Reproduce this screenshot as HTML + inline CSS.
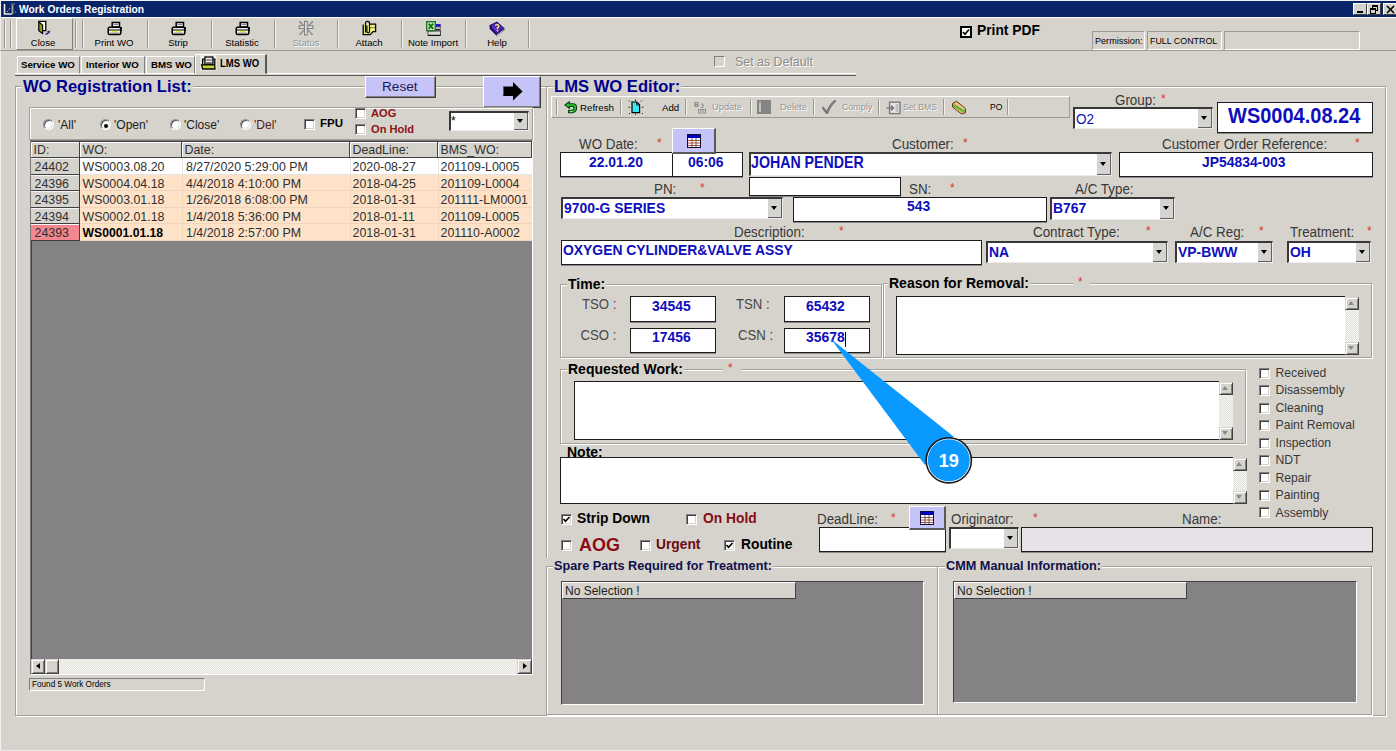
<!DOCTYPE html>
<html><head><meta charset="utf-8">
<style>
*{margin:0;padding:0;box-sizing:border-box}
html,body{width:1396px;height:751px;overflow:hidden}
body{background:#d6d3cd;position:relative;font-family:"Liberation Sans",sans-serif;color:#000}
.a{position:absolute}
.t{position:absolute;white-space:nowrap;line-height:1}
.etch{position:absolute;border:1px solid #a3a09a;box-shadow:inset 1px 1px 0 #fff,1px 1px 0 #fff}
.vsep{position:absolute;width:2px;border-left:1px solid #9a978f;border-right:1px solid #f2f1ee}
.tb{position:absolute;background:#fff;border:1px solid #1c1c1c;box-shadow:0 1px 0 #8a8a8a}
.cb{position:absolute;background:#fff;border-style:solid;border-width:2px 1px 1px 2px;border-color:#383838 #ececec #ececec #383838}
.dd{position:absolute;right:0;top:0;bottom:0;width:14px;background:#d6d4d0;border-right:1px solid #606060;border-bottom:1px solid #606060}
.dd:after{content:"";position:absolute;left:3px;top:50%;margin-top:-2.5px;border-left:3.5px solid transparent;border-right:3.5px solid transparent;border-top:4px solid #000}
.lbl{position:absolute;white-space:nowrap;line-height:1;font-size:13.4px;color:#383838;transform:scaleY(1.16);transform-origin:0 85%}
.star{position:absolute;color:#e03030;font-size:12px;line-height:1}
.val{position:absolute;white-space:nowrap;line-height:1;font-size:13.9px;font-weight:bold;color:#0e0ebc;transform:scaleY(1.1);transform-origin:0 85%}
.chk{position:absolute;width:11px;height:11px;background:#fff;border:1px solid;border-color:#808080 #fff #fff #808080;box-shadow:inset 1px 1px 0 #404040,inset -1px -1px 0 #d6d3cd}
.rad{position:absolute;width:11px;height:11px;border-radius:50%;background:#fff;border:1px solid;border-color:#909090 #fff #fff #909090;box-shadow:inset 1px 1px 0 #505050,inset -1px -1px 0 #e0ded8}
.btnl{position:absolute;background:#c6c3f8;border:1px solid;border-color:#fff #404040 #404040 #fff;box-shadow:inset -1px -1px 0 #808080}
.grp{position:absolute;font-weight:bold;font-size:14px;line-height:1;white-space:nowrap;background:#d6d3cd;padding:0 1px}
.tbl{font-size:9.6px;line-height:1;white-space:nowrap;position:absolute;transform:translateX(-50%)}
.vsb{position:absolute;width:14px;background:repeating-conic-gradient(#e2e0db 0 25%,#f6f5f2 0 50%) 0 0/2px 2px}
.sbu,.sbd{position:absolute;left:0;width:14px;height:13px;background:#d6d3cd;border:1px solid;border-color:#d6d3cd #404040 #404040 #d6d3cd;box-shadow:inset 1px 1px 0 #fff,inset -1px -1px 0 #808080}
.sbd{bottom:0}.sbu{top:0}
.sbu:after{content:"";position:absolute;left:2.5px;top:3.5px;border-left:3.5px solid transparent;border-right:3.5px solid transparent;border-bottom:4px solid #8a8a8a}
.sbd:after{content:"";position:absolute;left:2.5px;top:3.5px;border-left:3.5px solid transparent;border-right:3.5px solid transparent;border-top:4px solid #8a8a8a}
.memo{position:absolute;background:#fff;border:1px solid #1c1c1c;border-right:none}
</style></head><body>

<!-- title bar -->
<div class="a" style="left:0;top:0;width:1396px;height:1px;background:#f0f0f0"></div>
<div class="a" style="left:0;top:0;width:1px;height:751px;background:#f0f0f0"></div>
<div class="a" style="left:1px;top:1px;width:1395px;height:16px;background:#0a246a"></div>
<div class="t" style="left:19px;top:4.5px;font-size:10.3px;font-weight:bold;color:#fff">Work Orders Registration</div>
<svg class="a" style="left:3px;top:3px" width="14" height="12"><path d="M1.5 1v10H9" stroke="#e8e8e0" stroke-width="1.6" fill="none"/><path d="M4 9l3-4" stroke="#c8c8d8" stroke-width="1" stroke-dasharray="1 1"/><path d="M9.5 2v9" stroke="#a8a880" stroke-width="1.8"/><path d="M8 1h4" stroke="#8090b0" stroke-width="1"/><circle cx="12.5" cy="9" r="0.6" fill="#c0c0d0"/></svg>
<div class="a" style="left:1353px;top:3px;width:14px;height:12px;background:#d6d3cd;border:1px solid;border-color:#fff #404040 #404040 #fff"><div class="a" style="left:3px;top:7px;width:6px;height:2px;background:#000"></div></div>
<div class="a" style="left:1367px;top:3px;width:14px;height:12px;background:#d6d3cd;border:1px solid;border-color:#fff #404040 #404040 #fff"><div class="a" style="left:4px;top:1px;width:6px;height:6px;border:1px solid #000;border-top-width:2px"></div><div class="a" style="left:2px;top:4px;width:6px;height:6px;border:1px solid #000;border-top-width:2px;background:#d6d3cd"></div></div>
<div class="a" style="left:1383px;top:3px;width:14px;height:12px;background:#d6d3cd;border:1px solid;border-color:#fff #404040 #404040 #fff"><svg class="a" style="left:2px;top:1px" width="9" height="9"><path d="M1 1L8 8M8 1L1 8" stroke="#000" stroke-width="1.6"/></svg></div>
<div class="a" style="left:0;top:750px;width:1396px;height:1px;background:#ebeae6"></div>
<!-- toolbar -->
<div class="a" style="left:0;top:17px;width:1396px;height:1px;background:#fff"></div>
<div class="a" style="left:0;top:50px;width:1396px;height:1px;background:#9d9a94"></div>

<div class="vsep" style="left:4px;top:20px;height:28px"></div>
<div class="vsep" style="left:10px;top:20px;height:28px"></div>
<div class="a" style="left:16px;top:18px;width:57px;height:32px;border:1px solid;border-color:#fff #808080 #808080 #fff"></div>
<div class="vsep" style="left:75px;top:20px;height:28px"></div>
<div class="vsep" style="left:82px;top:20px;height:28px"></div>
<div class="vsep" style="left:147px;top:20px;height:28px"></div>
<div class="vsep" style="left:211px;top:20px;height:28px"></div>
<div class="vsep" style="left:274px;top:20px;height:28px"></div>
<div class="vsep" style="left:337px;top:20px;height:28px"></div>
<div class="vsep" style="left:401px;top:20px;height:28px"></div>
<div class="vsep" style="left:465px;top:20px;height:28px"></div>
<div class="vsep" style="left:528px;top:20px;height:28px"></div>
<div class="tbl" style="left:43px;top:38px">Close</div>
<div class="tbl" style="left:114px;top:38px">Print WO</div>
<div class="tbl" style="left:178px;top:38px">Strip</div>
<div class="tbl" style="left:242px;top:38px">Statistic</div>
<div class="tbl" style="left:306px;top:38px;color:#96948f;text-shadow:1px 1px 0 #fff">Status</div>
<div class="tbl" style="left:369px;top:38px">Attach</div>
<div class="tbl" style="left:433px;top:38px">Note Import</div>
<div class="tbl" style="left:497px;top:38px">Help</div>

<!-- print pdf / permission -->
<div class="a" style="left:960px;top:26px;width:12px;height:12px;border:2px solid #000;background:#fff"></div>
<svg class="a" style="left:960px;top:26px" width="12" height="12"><path d="M3 6 L5 8.3 L9 3.5" stroke="#000" stroke-width="1.7" fill="none"/></svg>
<div class="t" style="left:977px;top:24px;font-size:13.8px;font-weight:bold;color:#000">Print PDF</div>
<div class="a" style="left:1092px;top:31px;width:53px;height:19px;border:1px solid;border-color:#9d9a94 #fff #fff #9d9a94"></div>
<div class="t" style="left:1095px;top:37px;font-size:9.1px">Permission:</div>
<div class="a" style="left:1147px;top:31px;width:75px;height:19px;border:1px solid;border-color:#9d9a94 #fff #fff #9d9a94"></div>
<div class="t" style="left:1150px;top:37px;font-size:8.9px">FULL CONTROL</div>
<div class="a" style="left:1224px;top:31px;width:136px;height:19px;border:1px solid;border-color:#9d9a94 #fff #fff #9d9a94"></div>

<!-- tabs -->
<div class="a" style="left:15px;top:73px;width:841px;height:1px;background:#fff"></div>
<div class="a" style="left:15px;top:75px;width:841px;height:1px;background:#5a5a5a"></div>
<div class="a" style="left:17px;top:56px;width:63px;height:18px;border:1px solid;border-color:#fff #808080 transparent #fff"></div>
<div class="t" style="left:21px;top:60px;font-size:9.7px;font-weight:bold">Service WO</div>
<div class="a" style="left:81px;top:56px;width:64px;height:18px;border:1px solid;border-color:#fff #808080 transparent #fff"></div>
<div class="t" style="left:86px;top:60px;font-size:9.7px;font-weight:bold">Interior WO</div>
<div class="a" style="left:146px;top:56px;width:49px;height:18px;border:1px solid;border-color:#fff #808080 transparent #fff"></div>
<div class="t" style="left:151px;top:60px;font-size:9.7px;font-weight:bold">BMS WO</div>
<div class="a" style="left:195px;top:54px;width:72px;height:20px;background:#d6d3cd;border:1px solid;border-color:#fff #5a5a5a transparent #fff;border-right-width:2px"></div>
<svg class="a" style="left:200px;top:55px" width="17" height="16"><rect x="0.5" y="0.5" width="16" height="15" fill="#f6f6ee"/><path d="M2.6 10V4.2H4.6M12.8 4.2H14.8V10" stroke="#000" stroke-width="1.3" fill="#c8c8b0"/><rect x="4.9" y="2" width="8" height="7.4" fill="#ececf2" stroke="#000" stroke-width="1.3"/><path d="M6.2 5h5.5" stroke="#707070" stroke-width="1.4"/><path d="M6.2 8h5.5" stroke="#000" stroke-width="1"/><path d="M1.6 9.8H14.6L15 14H2.6Z" fill="#c8d838" stroke="#000" stroke-width="1.3"/></svg>
<div class="t" style="left:220px;top:58.5px;font-size:9.5px;font-weight:bold;transform:scaleY(1.12);transform-origin:0 85%">LMS WO</div>

<div class="t" style="left:714px;top:55.5px;width:11px;height:11px;border:1px solid;border-color:#808080 #fff #fff #808080"></div>
<div class="t" style="left:735px;top:55.5px;font-size:12.4px;color:#8c8a86;text-shadow:1px 1px 0 #fff">Set as Default</div>

<!-- outer frame -->
<div class="etch" style="left:15px;top:86px;width:1371px;height:630px"></div>
<div class="grp" style="left:22px;top:78px;font-size:16.5px;color:#00008c">WO Registration List:</div>

<!-- left panel -->
<div class="btnl" style="left:365px;top:76px;width:71px;height:22px"></div>
<div class="t" style="left:382px;top:80px;font-size:13.6px;color:#1c1c50">Reset</div>
<div class="btnl" style="left:483px;top:76px;width:58px;height:32px"></div>
<svg class="a" style="left:503px;top:82px" width="21" height="20"><path d="M0 4.5H10V0L19.6 9.6 10 18.6V14H0Z" fill="#000"/><path d="M0.5 5V13.5" stroke="#555" stroke-width="1"/></svg>

<div class="etch" style="left:29px;top:107px;width:504px;height:33px"></div>
<div class="rad" style="left:43px;top:119px"></div><div class="t" style="left:58px;top:119px;font-size:12px;color:#202020">'All'</div>
<div class="rad" style="left:100px;top:119px"></div><div class="a" style="left:103.5px;top:123.5px;width:4px;height:4px;border-radius:50%;background:#000"></div><div class="t" style="left:114px;top:119px;font-size:12px;color:#202020">'Open'</div>
<div class="rad" style="left:170px;top:119px"></div><div class="t" style="left:184px;top:119px;font-size:12px;color:#202020">'Close'</div>
<div class="rad" style="left:240px;top:119px"></div><div class="t" style="left:254px;top:119px;font-size:12px;color:#5a1a1a">'Del'</div>
<div class="chk" style="left:304px;top:119px"></div><div class="t" style="left:320px;top:118px;font-size:11.5px;font-weight:bold">FPU</div>
<div class="chk" style="left:355px;top:108px"></div><div class="t" style="left:371px;top:108px;font-size:11.1px;font-weight:bold;color:#8b1414">AOG</div>
<div class="chk" style="left:355px;top:124px"></div><div class="t" style="left:371px;top:124px;font-size:11.1px;font-weight:bold;color:#8b1414">On Hold</div>
<div class="cb" style="left:449px;top:111px;width:80px;height:20px"><div class="t" style="left:0px;top:2px;font-size:12px">*</div><div class="dd"></div></div>

<!-- grid -->
<div class="a" style="left:30px;top:140px;width:503px;height:535px;background:#858285;border:1px solid;border-color:#7a7a7a #fff #fff #7a7a7a;box-shadow:inset 1px 1px 0 #404040"></div>






<!--grid-->
<div class="a" style="left:31px;top:142px;width:49px;height:16px;background:#d6d3cd;border-right:1px solid #404040;border-bottom:1px solid #404040;box-shadow:inset 1px 1px 0 #fff"></div>
<div class="t" style="left:33.5px;top:143.5px;font-size:12.4px;color:#303030">ID:</div>
<div class="a" style="left:80px;top:142px;width:102px;height:16px;background:#d6d3cd;border-right:1px solid #404040;border-bottom:1px solid #404040;box-shadow:inset 1px 1px 0 #fff"></div>
<div class="t" style="left:82.5px;top:143.5px;font-size:12.4px;color:#303030">WO:</div>
<div class="a" style="left:182px;top:142px;width:168px;height:16px;background:#d6d3cd;border-right:1px solid #404040;border-bottom:1px solid #404040;box-shadow:inset 1px 1px 0 #fff"></div>
<div class="t" style="left:184.5px;top:143.5px;font-size:12.4px;color:#303030">Date:</div>
<div class="a" style="left:350px;top:142px;width:88px;height:16px;background:#d6d3cd;border-right:1px solid #404040;border-bottom:1px solid #404040;box-shadow:inset 1px 1px 0 #fff"></div>
<div class="t" style="left:352.5px;top:143.5px;font-size:12.4px;color:#303030">DeadLine:</div>
<div class="a" style="left:438px;top:142px;width:94px;height:16px;background:#d6d3cd;border-right:1px solid #404040;border-bottom:1px solid #404040;box-shadow:inset 1px 1px 0 #fff"></div>
<div class="t" style="left:440.5px;top:143.5px;font-size:12.4px;color:#303030">BMS_WO:</div>
<div class="a" style="left:31px;top:158px;width:49px;height:17px;background:#d6d3cd;border-right:1px solid #404040;border-bottom:1px solid #404040;box-shadow:inset 0 1px 0 #f4f4f4"></div>
<div class="t" style="left:34.5px;top:160.8px;font-size:12.4px;color:#303030">24402</div>
<div class="a" style="left:80px;top:158px;width:452px;height:17px;background:#ffffff;border-bottom:1px solid #e6e4e0"></div>
<div class="t" style="left:82.5px;top:160.8px;color:#303030;font-size:12.4px">WS0003.08.20</div>
<div class="a" style="left:181.5px;top:158px;width:1px;height:17px;background:#e6e4e0"></div>
<div class="t" style="left:186px;top:160.8px;color:#303030;font-size:12.4px">8/27/2020 5:29:00 PM</div>
<div class="a" style="left:349.5px;top:158px;width:1px;height:17px;background:#e6e4e0"></div>
<div class="t" style="left:352.5px;top:160.8px;color:#303030;font-size:12.4px">2020-08-27</div>
<div class="a" style="left:437.5px;top:158px;width:1px;height:17px;background:#e6e4e0"></div>
<div class="t" style="left:440.5px;top:160.8px;color:#303030;font-size:12.4px">201109-L0005</div>
<div class="a" style="left:31px;top:175px;width:49px;height:16px;background:#d6d3cd;border-right:1px solid #404040;border-bottom:1px solid #404040;box-shadow:inset 0 1px 0 #f4f4f4"></div>
<div class="t" style="left:34.5px;top:177.8px;font-size:12.4px;color:#303030">24396</div>
<div class="a" style="left:80px;top:175px;width:452px;height:16px;background:#fde2c8;border-bottom:1px solid #f0d4bc"></div>
<div class="t" style="left:82.5px;top:177.8px;color:#303030;font-size:12.4px">WS0004.04.18</div>
<div class="a" style="left:181.5px;top:175px;width:1px;height:16px;background:#f0d4bc"></div>
<div class="t" style="left:186px;top:177.8px;color:#303030;font-size:12.4px">4/4/2018 4:10:00 PM</div>
<div class="a" style="left:349.5px;top:175px;width:1px;height:16px;background:#f0d4bc"></div>
<div class="t" style="left:352.5px;top:177.8px;color:#303030;font-size:12.4px">2018-04-25</div>
<div class="a" style="left:437.5px;top:175px;width:1px;height:16px;background:#f0d4bc"></div>
<div class="t" style="left:440.5px;top:177.8px;color:#303030;font-size:12.4px">201109-L0004</div>
<div class="a" style="left:31px;top:191px;width:49px;height:17px;background:#d6d3cd;border-right:1px solid #404040;border-bottom:1px solid #404040;box-shadow:inset 0 1px 0 #f4f4f4"></div>
<div class="t" style="left:34.5px;top:193.8px;font-size:12.4px;color:#303030">24395</div>
<div class="a" style="left:80px;top:191px;width:452px;height:17px;background:#fde2c8;border-bottom:1px solid #f0d4bc"></div>
<div class="t" style="left:82.5px;top:193.8px;color:#303030;font-size:12.4px">WS0003.01.18</div>
<div class="a" style="left:181.5px;top:191px;width:1px;height:17px;background:#f0d4bc"></div>
<div class="t" style="left:186px;top:193.8px;color:#303030;font-size:12.4px">1/26/2018 6:08:00 PM</div>
<div class="a" style="left:349.5px;top:191px;width:1px;height:17px;background:#f0d4bc"></div>
<div class="t" style="left:352.5px;top:193.8px;color:#303030;font-size:12.4px">2018-01-31</div>
<div class="a" style="left:437.5px;top:191px;width:1px;height:17px;background:#f0d4bc"></div>
<div class="t" style="left:440.5px;top:193.8px;color:#303030;font-size:12.4px">201111-LM0001</div>
<div class="a" style="left:31px;top:208px;width:49px;height:16px;background:#d6d3cd;border-right:1px solid #404040;border-bottom:1px solid #404040;box-shadow:inset 0 1px 0 #f4f4f4"></div>
<div class="t" style="left:34.5px;top:210.8px;font-size:12.4px;color:#303030">24394</div>
<div class="a" style="left:80px;top:208px;width:452px;height:16px;background:#fde2c8;border-bottom:1px solid #f0d4bc"></div>
<div class="t" style="left:82.5px;top:210.8px;color:#303030;font-size:12.4px">WS0002.01.18</div>
<div class="a" style="left:181.5px;top:208px;width:1px;height:16px;background:#f0d4bc"></div>
<div class="t" style="left:186px;top:210.8px;color:#303030;font-size:12.4px">1/4/2018 5:36:00 PM</div>
<div class="a" style="left:349.5px;top:208px;width:1px;height:16px;background:#f0d4bc"></div>
<div class="t" style="left:352.5px;top:210.8px;color:#303030;font-size:12.4px">2018-01-11</div>
<div class="a" style="left:437.5px;top:208px;width:1px;height:16px;background:#f0d4bc"></div>
<div class="t" style="left:440.5px;top:210.8px;color:#303030;font-size:12.4px">201109-L0005</div>
<div class="a" style="left:31px;top:224px;width:49px;height:17px;background:#f3868e;border-right:1px solid #404040;border-bottom:1px solid #404040;box-shadow:inset 0 1px 0 #f4f4f4"></div>
<div class="t" style="left:34.5px;top:226.8px;font-size:12.4px;color:#303030">24393</div>
<div class="a" style="left:80px;top:224px;width:452px;height:17px;background:#fde2c8;border-bottom:1px solid #f0d4bc"></div>
<div class="t" style="left:82.5px;top:226.8px;font-weight:bold;color:#000;font-size:12.2px">WS0001.01.18</div>
<div class="a" style="left:181.5px;top:224px;width:1px;height:17px;background:#f0d4bc"></div>
<div class="t" style="left:186px;top:226.8px;color:#303030;font-size:12.4px">1/4/2018 2:57:00 PM</div>
<div class="a" style="left:349.5px;top:224px;width:1px;height:17px;background:#f0d4bc"></div>
<div class="t" style="left:352.5px;top:226.8px;color:#303030;font-size:12.4px">2018-01-31</div>
<div class="a" style="left:437.5px;top:224px;width:1px;height:17px;background:#f0d4bc"></div>
<div class="t" style="left:440.5px;top:226.8px;color:#303030;font-size:12.4px">201110-A0002</div>
<!--/grid-->
<!-- status bar of left grid -->
<div class="a" style="left:31px;top:659px;width:501px;height:15px;background:repeating-conic-gradient(#e6e4df 0 25%,#f4f3f0 0 50%) 0 0/2px 2px"></div>
<div class="a" style="left:31px;top:659px;width:14px;height:15px;background:#d6d3cd;border:1px solid;border-color:#d6d3cd #404040 #404040 #d6d3cd;box-shadow:inset 1px 1px 0 #fff,inset -1px -1px 0 #808080"><div class="a" style="left:4px;top:3px;border-top:3.5px solid transparent;border-bottom:3.5px solid transparent;border-right:4px solid #000"></div></div>
<div class="a" style="left:45px;top:659px;width:14px;height:15px;background:#d6d3cd;border:1px solid;border-color:#d6d3cd #404040 #404040 #d6d3cd;box-shadow:inset 1px 1px 0 #fff,inset -1px -1px 0 #808080"></div>
<div class="a" style="left:517px;top:659px;width:15px;height:15px;background:#d6d3cd;border:1px solid;border-color:#d6d3cd #404040 #404040 #d6d3cd;box-shadow:inset 1px 1px 0 #fff,inset -1px -1px 0 #808080"><div class="a" style="left:5px;top:3px;border-top:3.5px solid transparent;border-bottom:3.5px solid transparent;border-left:4px solid #000"></div></div>
<div class="a" style="left:29px;top:678px;width:176px;height:13px;border:1px solid;border-color:#808080 #fff #fff #808080"></div>
<div class="t" style="left:32px;top:681px;font-size:8.2px;color:#000">Found 5 Work Orders</div>

<!-- right panel -->
<div class="etch" style="left:546px;top:86px;width:840px;height:630px"></div>
<div class="grp" style="left:553px;top:79px;font-size:16.6px;color:#00008c">LMS WO Editor:</div>

<!-- editor toolbar -->
<div class="a" style="left:551px;top:96px;width:519px;height:22px;border:1px solid;border-color:#fff #9d9a94 #9d9a94 #fff"></div>
<div class="vsep" style="left:556px;top:99px;height:16px"></div>
<div class="t" style="left:580px;top:103px;font-size:9.7px">Refresh</div>
<div class="vsep" style="left:620px;top:99px;height:16px"></div>
<div class="t" style="left:662px;top:103px;font-size:9.7px">Add</div>
<div class="vsep" style="left:685px;top:99px;height:16px"></div>
<div class="t" style="left:712px;top:103px;font-size:9.3px;color:#96948f;text-shadow:1px 1px 0 #fff">Update</div>
<div class="vsep" style="left:750px;top:99px;height:16px"></div>
<div class="t" style="left:780px;top:103px;font-size:9.3px;color:#96948f;text-shadow:1px 1px 0 #fff">Delete</div>
<div class="vsep" style="left:813px;top:99px;height:16px"></div>
<div class="t" style="left:842px;top:103px;font-size:8.9px;color:#96948f;text-shadow:1px 1px 0 #fff">Comply</div>
<div class="vsep" style="left:878px;top:99px;height:16px"></div>
<div class="t" style="left:903px;top:103px;font-size:8.6px;color:#96948f;text-shadow:1px 1px 0 #fff">Set BMS</div>
<div class="vsep" style="left:943px;top:99px;height:16px"></div>
<div class="t" style="left:990px;top:103px;font-size:8.6px">PO</div>
<div class="vsep" style="left:1007px;top:99px;height:16px"></div>

<!-- group / WO no -->
<div class="lbl" style="left:1115px;top:94px">Group:</div><div class="star" style="left:1161px;top:93px">*</div>
<div class="cb" style="left:1073px;top:107px;width:140px;height:22px"><div class="val" style="left:1px;top:3.5px;font-weight:normal;font-size:13.5px">O2</div><div class="dd"></div></div>
<div class="tb" style="left:1217px;top:102px;width:156px;height:31px"></div>
<div class="val" style="left:1228px;top:106px;font-size:20px">WS0004.08.24</div>

<!-- row 1 -->
<div class="lbl" style="left:579px;top:138px">WO Date:</div><div class="star" style="left:657px;top:137px">*</div>

<div class="lbl" style="left:892px;top:138px">Customer:</div><div class="star" style="left:963px;top:137px">*</div>
<div class="lbl" style="left:1162px;top:138px">Customer Order Reference:</div><div class="star" style="left:1355px;top:137px">*</div>
<div class="tb" style="left:560px;top:152px;width:113px;height:25px"></div>
<div class="val" style="left:589px;top:156px">22.01.20</div>
<div class="tb" style="left:672px;top:152px;width:71px;height:25px"></div>
<div class="val" style="left:688px;top:156px">06:06</div>
<div class="cb" style="left:749px;top:152px;width:363px;height:24px"><div class="val" style="left:0px;top:2px;font-size:14.2px">JOHAN PENDER</div><div class="dd"></div></div>
<div class="tb" style="left:1119px;top:152px;width:254px;height:25px"></div>
<div class="val" style="left:1202px;top:156px">JP54834-003</div>

<!-- row 2 -->
<div class="lbl" style="left:654px;top:183px">PN:</div><div class="star" style="left:700px;top:182px">*</div>
<div class="tb" style="left:749px;top:177px;width:152px;height:19px"></div>
<div class="lbl" style="left:909px;top:183px">SN:</div><div class="star" style="left:950px;top:182px">*</div>
<div class="lbl" style="left:1075px;top:183px">A/C Type:</div>
<div class="cb" style="left:561px;top:197px;width:222px;height:22px"><div class="val" style="left:1px;top:2.5px">9700-G SERIES</div><div class="dd"></div></div>
<div class="tb" style="left:793px;top:197px;width:254px;height:25px"></div>
<div class="val" style="left:907px;top:200px">543</div>
<div class="cb" style="left:1050px;top:197px;width:125px;height:23px"><div class="val" style="left:1px;top:2.5px">B767</div><div class="dd"></div></div>

<!-- row 3 -->
<div class="lbl" style="left:734px;top:226px">Description:</div><div class="star" style="left:839px;top:225px">*</div>
<div class="lbl" style="left:1033px;top:226px">Contract Type:</div><div class="star" style="left:1146px;top:225px">*</div>
<div class="lbl" style="left:1190px;top:226px">A/C Reg:</div><div class="star" style="left:1259px;top:225px">*</div>
<div class="lbl" style="left:1290px;top:226px">Treatment:</div><div class="star" style="left:1367px;top:225px">*</div>
<div class="tb" style="left:561px;top:240px;width:421px;height:25px"></div>
<div class="val" style="left:563px;top:244px">OXYGEN CYLINDER&amp;VALVE ASSY</div>
<div class="cb" style="left:986px;top:241px;width:182px;height:22px"><div class="val" style="left:1px;top:2.5px">NA</div><div class="dd"></div></div>
<div class="cb" style="left:1175px;top:241px;width:98px;height:22px"><div class="val" style="left:1px;top:2.5px">VP-BWW</div><div class="dd"></div></div>
<div class="cb" style="left:1287px;top:241px;width:84px;height:22px"><div class="val" style="left:1px;top:2.5px">OH</div><div class="dd"></div></div>

<!-- time group -->
<div class="etch" style="left:560px;top:284px;width:322px;height:74px"></div>
<div class="grp" style="left:567px;top:277px;font-size:14px;font-weight:bold">Time:</div>
<div class="lbl" style="left:582px;top:298px;font-size:13.2px;color:#484848">TSO :</div>
<div class="tb" style="left:630px;top:296px;width:86px;height:26px"></div>
<div class="val" style="left:652px;top:299.5px">34545</div>
<div class="lbl" style="left:580.5px;top:329.3px;font-size:13.2px;color:#484848">CSO :</div>
<div class="tb" style="left:630px;top:328px;width:86px;height:25px"></div>
<div class="val" style="left:652px;top:331px">17456</div>
<div class="lbl" style="left:736px;top:298px;font-size:13.2px;color:#484848">TSN :</div>
<div class="tb" style="left:784px;top:296px;width:86px;height:26px"></div>
<div class="val" style="left:806px;top:299.5px">65432</div>
<div class="lbl" style="left:738px;top:329.3px;font-size:13.2px;color:#484848">CSN :</div>
<div class="tb" style="left:784px;top:328px;width:86px;height:25px"></div>
<div class="val" style="left:806px;top:331px">35678</div>
<div class="a" style="left:845px;top:332px;width:1px;height:15px;background:#000"></div>

<!-- reason group -->
<div class="etch" style="left:883px;top:283px;width:489px;height:75px"></div>
<div class="grp" style="left:888px;top:276px;font-size:14px">Reason for Removal:</div>
<div class="star" style="left:1074px;top:277.5px;background:#d6d3cd;padding:0 7px 0 4px;line-height:0.8">*</div>
<div class="memo" style="left:896px;top:296px;width:449px;height:59px"></div><div class="vsb" style="left:1344.5px;top:296.5px;height:58px"><div class="sbu"></div><div class="sbd"></div></div>

<!-- requested work group -->
<div class="etch" style="left:560px;top:369px;width:686px;height:75px"></div>
<div class="grp" style="left:567px;top:362px;font-size:14px">Requested Work:</div>
<div class="star" style="left:723px;top:364px;background:#d6d3cd;padding:0 9px 0 5px;line-height:0.8">*</div>
<div class="memo" style="left:574px;top:381px;width:645px;height:59px"></div><div class="vsb" style="left:1218.5px;top:381.5px;height:58px"><div class="sbu"></div><div class="sbd"></div></div>

<!-- note -->
<div class="t" style="left:567px;top:445px;font-size:14px;font-weight:bold">Note:</div>
<div class="memo" style="left:560px;top:457px;width:673px;height:47px"></div><div class="vsb" style="left:1232.5px;top:457.5px;height:46px"><div class="sbu"></div><div class="sbd"></div></div>

<!-- checkboxes right -->
<div id="rchk"><div class="chk" style="left:1259px;top:368px"></div><div class="t" style="left:1275.5px;top:367.0px;font-size:12.2px;color:#383838">Received</div>
<div class="chk" style="left:1259px;top:385px"></div><div class="t" style="left:1275.5px;top:384.4px;font-size:12.2px;color:#383838">Disassembly</div>
<div class="chk" style="left:1259px;top:403px"></div><div class="t" style="left:1275.5px;top:401.9px;font-size:12.2px;color:#383838">Cleaning</div>
<div class="chk" style="left:1259px;top:420px"></div><div class="t" style="left:1275.5px;top:419.3px;font-size:12.2px;color:#383838">Paint Removal</div>
<div class="chk" style="left:1259px;top:438px"></div><div class="t" style="left:1275.5px;top:436.8px;font-size:12.2px;color:#383838">Inspection</div>
<div class="chk" style="left:1259px;top:455px"></div><div class="t" style="left:1275.5px;top:454.2px;font-size:12.2px;color:#383838">NDT</div>
<div class="chk" style="left:1259px;top:472px"></div><div class="t" style="left:1275.5px;top:471.7px;font-size:12.2px;color:#383838">Repair</div>
<div class="chk" style="left:1259px;top:490px"></div><div class="t" style="left:1275.5px;top:489.1px;font-size:12.2px;color:#383838">Painting</div>
<div class="chk" style="left:1259px;top:507px"></div><div class="t" style="left:1275.5px;top:506.6px;font-size:12.2px;color:#383838">Assembly</div></div></div>

<!-- bottom options -->
<div class="chk" style="left:561px;top:514px"></div><svg class="a" style="left:561px;top:514px" width="11" height="11"><path d="M2.5 5 L4.5 7.3 L8.5 3" stroke="#000" stroke-width="1.7" fill="none"/></svg>
<div class="t" style="left:577px;top:512px;font-size:13.8px;font-weight:bold">Strip Down</div>
<div class="chk" style="left:686px;top:514px"></div>
<div class="t" style="left:703px;top:512px;font-size:13.8px;font-weight:bold;color:#850c14">On Hold</div>
<div class="chk" style="left:561px;top:540px"></div>
<div class="t" style="left:579px;top:536px;font-size:18px;font-weight:bold;color:#8c0c16">AOG</div>
<div class="chk" style="left:640px;top:540px"></div>
<div class="t" style="left:656px;top:538px;font-size:13.8px;font-weight:bold;color:#6a0c12">Urgent</div>
<div class="chk" style="left:724px;top:540px"></div><svg class="a" style="left:724px;top:540px" width="11" height="11"><path d="M2.5 5 L4.5 7.3 L8.5 3" stroke="#000" stroke-width="1.7" fill="none"/></svg>
<div class="t" style="left:741px;top:538px;font-size:13.8px;font-weight:bold">Routine</div>

<div class="lbl" style="left:817px;top:513px">DeadLine:</div><div class="star" style="left:891px;top:512px">*</div>

<div class="tb" style="left:819px;top:527px;width:127px;height:25px"></div>
<div class="lbl" style="left:951px;top:513px">Originator:</div><div class="star" style="left:1033px;top:512px">*</div>
<div class="lbl" style="left:1182px;top:513px">Name:</div>
<div class="cb" style="left:949px;top:527px;width:70px;height:22px"><div class="dd"></div></div>
<div class="tb" style="left:1021px;top:527px;width:352px;height:25px;background:#e6e2e8"></div>

<!-- spare parts / cmm -->
<div class="a" style="left:545px;top:558px;width:4px;height:8px;background:#d6d3cd"></div>
<div class="etch" style="left:546px;top:566px;width:392px;height:149px"></div>
<div class="grp" style="left:553px;top:560px;font-size:12.7px;color:#10104c">Spare Parts Required for Treatment:</div>
<div class="a" style="left:561px;top:581px;width:363px;height:124px;background:#858285;border:1px solid;border-color:#404040 #fff #fff #404040"></div>
<div class="a" style="left:562px;top:582px;width:234px;height:17px;background:#d6d3cd;border:1px solid;border-color:#fff #404040 #404040 #fff"></div>
<div class="t" style="left:565px;top:585px;font-size:12px;color:#202020">No Selection !</div>

<div class="etch" style="left:937px;top:566px;width:435px;height:149px"></div>
<div class="grp" style="left:945px;top:560px;font-size:12.7px;color:#10104c">CMM Manual Information:</div>
<div class="a" style="left:953px;top:581px;width:404px;height:122px;background:#858285;border:1px solid;border-color:#404040 #fff #fff #404040"></div>
<div class="a" style="left:954px;top:582px;width:233px;height:17px;background:#d6d3cd;border:1px solid;border-color:#fff #404040 #404040 #fff"></div>
<div class="t" style="left:957px;top:585px;font-size:12px;color:#202020">No Selection !</div>


<div class="btnl" style="left:672px;top:128px;width:44px;height:26px;border-right-width:2px;border-bottom-width:2px;border-color:#fff #5a5a5a #5a5a5a #fff;box-shadow:none"></div>
<div class="btnl" style="left:909px;top:506px;width:37px;height:24px;border-right-width:2px;border-bottom-width:2px;border-color:#fff #5a5a5a #5a5a5a #fff;box-shadow:none"></div>
<!-- toolbar icons -->
<svg class="a" style="left:37px;top:20px" width="15" height="16"><path d="M2.2 1.4h6.6v9.2H5.5" fill="#fffff0" stroke="#000" stroke-width="1.3"/><path d="M1.8 1.6L5.6 5.2V13.6L1.8 10.6Z" fill="#8a9c1c" stroke="#000" stroke-width="1.2"/><path d="M8.5 14.2q2.2 0 3.2-2.2" stroke="#2a2070" stroke-width="1.5" fill="none"/><path d="M10 11.2l3.2-0.6-0.8 3z" fill="#2a2070"/></svg>
<svg class="a" style="left:107px;top:21px" width="16" height="15"><path d="M5.2 1.5h7.3v4.5H5.2z" fill="#fff" stroke="#000" stroke-width="1.5"/><path d="M6.5 3.5h5" stroke="#808080" stroke-width="1.2"/><rect x="1.2" y="6.2" width="12.6" height="7.4" rx="1.6" fill="#f0f0f0" stroke="#000" stroke-width="1.5"/><path d="M2 9h11.5" stroke="#000" stroke-width="1"/><path d="M5 10.6h5" stroke="#d0f040" stroke-width="1.5"/><path d="M2.5 12.2h10" stroke="#606060" stroke-width="0.8"/><path d="M14.2 6v4" stroke="#000" stroke-width="1.4"/></svg>
<svg class="a" style="left:171px;top:21px" width="16" height="15"><path d="M5.2 1.5h7.3v4.5H5.2z" fill="#fff" stroke="#000" stroke-width="1.5"/><path d="M6.5 3.5h5" stroke="#808080" stroke-width="1.2"/><rect x="1.2" y="6.2" width="12.6" height="7.4" rx="1.6" fill="#f0f0f0" stroke="#000" stroke-width="1.5"/><path d="M2 9h11.5" stroke="#000" stroke-width="1"/><path d="M5 10.6h5" stroke="#d0f040" stroke-width="1.5"/><path d="M2.5 12.2h10" stroke="#606060" stroke-width="0.8"/><path d="M14.2 6v4" stroke="#000" stroke-width="1.4"/></svg>
<svg class="a" style="left:235px;top:21px" width="16" height="15"><path d="M5.2 1.5h7.3v4.5H5.2z" fill="#fff" stroke="#000" stroke-width="1.5"/><path d="M6.5 3.5h5" stroke="#808080" stroke-width="1.2"/><rect x="1.2" y="6.2" width="12.6" height="7.4" rx="1.6" fill="#f0f0f0" stroke="#000" stroke-width="1.5"/><path d="M2 9h11.5" stroke="#000" stroke-width="1"/><path d="M5 10.6h5" stroke="#d0f040" stroke-width="1.5"/><path d="M2.5 12.2h10" stroke="#606060" stroke-width="0.8"/><path d="M14.2 6v4" stroke="#000" stroke-width="1.4"/></svg>
<svg class="a" style="left:294px;top:19px" width="24" height="18"><path d="M5.5 2.5L18.5 15.8M18.8 2.5L5.5 15.8" stroke="#7c7c7c" stroke-width="1.5"/><path d="M6.5 4L17.5 15M17.8 4L6.5 15" stroke="#fff" stroke-width="0.6" opacity="0.6"/><rect x="5.2" y="6.8" width="13.6" height="2.6" fill="#f4f4f4" stroke="#7c7c7c" stroke-width="1.1"/><rect x="10.6" y="2.4" width="2.6" height="13.4" fill="#f4f4f4" stroke="#7c7c7c" stroke-width="1.1"/></svg>
<svg class="a" style="left:358px;top:19px" width="24" height="18"><path d="M5.2 5.5V15.6H12.2L15 12.6H17.6V5.2H11" fill="#f2f284" stroke="#000" stroke-width="1.3"/><path d="M11.5 8.6H17" stroke="#8a8a40" stroke-width="1.1"/><path d="M7.5 13.5V4.2q0-1.8 2-1.8t2 1.8V12.5q0 1.3-1.3 1.3T8.9 12.5V6.5" stroke="#000" stroke-width="1.2" fill="none"/></svg>
<svg class="a" style="left:426px;top:21px" width="15" height="15"><rect x="9" y="3.5" width="5.5" height="11" fill="#b8b8b8" stroke="#707070" stroke-width="0.8"/><rect x="9" y="3" width="5.5" height="3" fill="#2020c0"/><path d="M9 8.8h5" stroke="#000" stroke-width="1.2"/><rect x="2" y="10" width="12.5" height="4.5" fill="#d8dcd8" stroke="#404040" stroke-width="0.9"/><path d="M2 14.3h12.5" stroke="#000" stroke-width="1"/><rect x="0.7" y="0.7" width="8.6" height="9" fill="#c8f0c8" stroke="#287028" stroke-width="1.4"/><path d="M2.6 2.6l4.6 5.3M7.2 2.6L2.6 7.9" stroke="#107010" stroke-width="1.8"/></svg>
<svg class="a" style="left:486px;top:19px" width="24" height="18"><path d="M4 6.5V9.8L10.5 16.2V15Z" fill="#2a1080" stroke="#100850" stroke-width="0.8"/><path d="M10.5 15.2L18.2 9.6V11.2L10.6 16.6Z" fill="#f4f4f4" stroke="#404040" stroke-width="0.6"/><path d="M4 6.5L11 3L18.2 9.6L10.5 15.2Z" fill="#4a20b8" stroke="#100850" stroke-width="1"/><path d="M6 7.5L12 12.5" stroke="#8a60e0" stroke-width="0.8"/><path d="M9.2 6.5q1.6-1.8 3-0.4t-0.8 2.6v1.2" stroke="#f0e070" stroke-width="1.5" fill="none"/><circle cx="11.6" cy="11.4" r="0.9" fill="#f0e070"/></svg>

<!-- editor toolbar icons -->
<svg class="a" style="left:563px;top:100px" width="16" height="15"><path d="M2 5L6.3 1.8V3.8H9.8Q13.6 3.8 13.6 7.6Q13.6 11.8 9.6 12.8H5.6V10.2H9.4Q11 10 11 7.8Q11 6.4 9.6 6.4H6.3V8.4Z" fill="#2ed02e" stroke="#0c3c0c" stroke-width="1.1" stroke-linejoin="round"/><path d="M7 11.5H9.5" stroke="#a0f0a0" stroke-width="0.8"/></svg>
<svg class="a" style="left:627px;top:99px" width="18" height="16"><path d="M5 3H9.8L12.6 5.8V13.6H5Z" fill="#40e4f0" stroke="#000" stroke-width="1.2"/><path d="M9.6 3.2V6H12.4" fill="none" stroke="#000" stroke-width="0.8"/><path d="M8.5 0.5v1.6M1.5 8.3h1.6M14.8 8.3h1.6M2 1.5l1 1M16 15l-1-1M2 15l1-1M8.5 14.5v1.3M15 1.5l-1 1" stroke="#202020" stroke-width="1"/></svg>
<svg class="a" style="left:694px;top:101px" width="13" height="13"><text x="0" y="6" font-size="7" font-weight="bold" font-family="Liberation Sans" fill="#808080">B</text><path d="M7 3h2v4M8 7l-1-1M8 7l1-1" stroke="#909090" fill="none"/><rect x="4.5" y="8.5" width="7" height="3.5" fill="none" stroke="#909090"/><path d="M6 10h4" stroke="#909090"/></svg>
<svg class="a" style="left:757px;top:100px" width="15" height="14"><rect x="0" y="0" width="14" height="14" fill="#848484"/><path d="M3 3v9" stroke="#fff" stroke-width="1"/><rect x="2.5" y="1.5" width="1" height="1" fill="#fff"/></svg>
<svg class="a" style="left:822px;top:100px" width="14" height="14"><path d="M1 8l4 5q3-8 8-12" fill="none" stroke="#7c7c7c" stroke-width="2.6" stroke-linecap="round"/></svg>
<svg class="a" style="left:886px;top:101px" width="16" height="14"><rect x="3.6" y="1.2" width="10.4" height="11.4" fill="#e6e6e6" stroke="#7a7a7a" stroke-width="1.4"/><path d="M9.5 4h3M9.5 6h3M9.5 8h3M9.5 10h3" stroke="#8a8a8a" stroke-width="0.8"/><path d="M0.5 7H7M5 4.6L7.6 7L5 9.4" stroke="#7a7a7a" stroke-width="1.6" fill="none"/></svg>
<svg class="a" style="left:951px;top:100px" width="16" height="15"><path d="M1.5 3.5L5.5 1.2L14.5 8.5V12.8L10.5 14L1.5 7Z" fill="#d8a868" stroke="#6a3a18" stroke-width="1"/><path d="M2.5 5.5L13.5 11.5" stroke="#58b838" stroke-width="2"/><path d="M4.5 3L13.5 9.2" stroke="#f2d8a0" stroke-width="1.2"/><path d="M4 8.2L11 12.6" stroke="#e8c070" stroke-width="1"/></svg>
<svg class="a" style="left:687px;top:134px" width="14" height="14"><rect x="0.5" y="0.5" width="13" height="13" fill="#fff" stroke="#101030"/><rect x="1" y="1" width="12" height="3" fill="#0000c0"/><path d="M1 6.5h12M1 9h12M1 11.5h12" stroke="#c04848" stroke-width="1.2"/><path d="M5 4v9M9 4v9" stroke="#486848" stroke-width="1"/><rect x="1" y="4.5" width="3" height="1.3" fill="#fff"/></svg>
<svg class="a" style="left:920px;top:511px" width="14" height="14"><rect x="0.5" y="0.5" width="13" height="13" fill="#fff" stroke="#101030"/><rect x="1" y="1" width="12" height="3" fill="#0000c0"/><path d="M1 6.5h12M1 9h12M1 11.5h12" stroke="#c04848" stroke-width="1.2"/><path d="M5 4v9M9 4v9" stroke="#486848" stroke-width="1"/><rect x="1" y="4.5" width="3" height="1.3" fill="#fff"/></svg>

<!-- callout -->
<svg class="a" style="left:0;top:0" width="1396" height="751"><path d="M831 339 L953.5 436.5 L925 465 Z" fill="#0a9aff"/><circle cx="948.8" cy="460.3" r="21.5" fill="#0a9aff" stroke="#fff" stroke-width="1"/><circle cx="948.8" cy="460.3" r="22.6" fill="none" stroke="#1a1a1a" stroke-width="1.6"/><text x="948.8" y="466.8" text-anchor="middle" font-family="Liberation Sans" font-weight="bold" font-size="18" fill="#fff">19</text></svg>
</body></html>
